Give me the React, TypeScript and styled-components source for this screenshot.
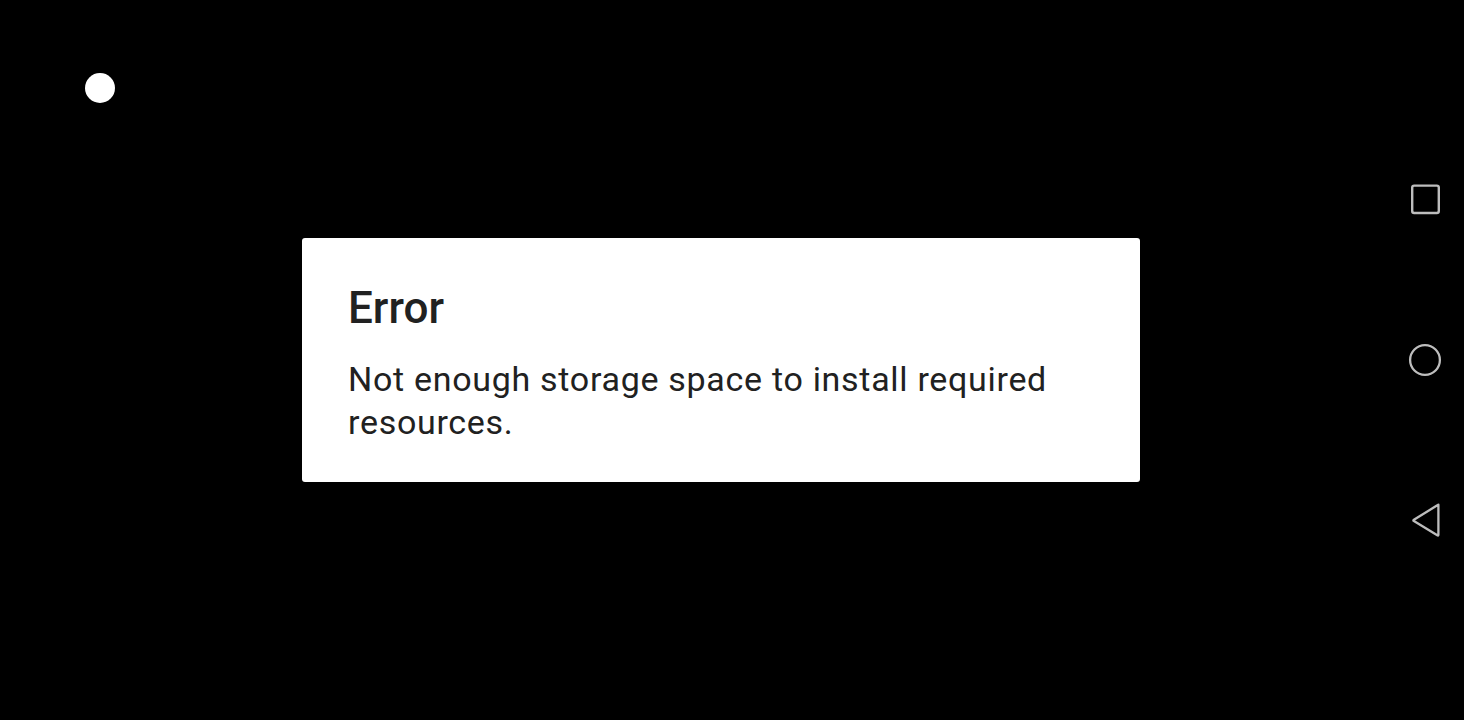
import React from "react";
import styled, { createGlobalStyle } from "styled-components";

const GlobalStyle = createGlobalStyle`
  html, body {
    margin: 0;
    padding: 0;
    background: #000;
  }
  body {
    font-family: Roboto, "Noto Sans", sans-serif;
  }
`;

const Screen = styled.div`
  width: 1464px;
  height: 720px;
  background: #000;
  display: grid;
  grid-template-columns: 1fr 78px;
  overflow: hidden;
`;

const Main = styled.div`
  display: flex;
  flex-direction: column;
  align-items: flex-start;
  padding: 73px 0 0 85px;
`;

const Dot = styled.div`
  width: 30px;
  height: 30px;
  border-radius: 50%;
  background: #fff;
`;

const Dialog = styled.div`
  margin: 135px 0 0 217px;
  width: 838px;
  box-sizing: border-box;
  padding: 44px 46px 37px;
  background: #fff;
  border-radius: 3px;
  display: flex;
  flex-direction: column;
  gap: 24px;
`;

const Title = styled.div`
  font-family: Roboto, sans-serif;
  font-weight: 500;
  font-size: 44px;
  line-height: 52px;
  color: #212121;
`;

const Message = styled.div`
  font-family: Roboto, sans-serif;
  font-weight: 400;
  font-size: 34px;
  letter-spacing: 0.7px;
  line-height: 43.3px;
  color: #212121;
`;

const NavBar = styled.div`
  display: flex;
  flex-direction: column;
  align-items: center;
  justify-content: center;
  gap: 120px;
`;

const NavButton = styled.div`
  width: 40px;
  height: 40px;
  display: flex;
  align-items: center;
  justify-content: center;
  color: #bdbdbd;
`;

export default function App() {
  return (
    <>
      <GlobalStyle />
      <Screen>
        <Main>
          <Dot />
          <Dialog>
            <Title>Error</Title>
            <Message>
              Not enough storage space to install required resources.
            </Message>
          </Dialog>
        </Main>
        <NavBar>
          <NavButton>
            <svg width="40" height="40" viewBox="0 0 40 40">
              <rect x="7.2" y="5.6" width="26.6" height="27.4" rx="2" fill="none" stroke="currentColor" strokeWidth="2.4" />
            </svg>
          </NavButton>
          <NavButton>
            <svg width="40" height="40" viewBox="0 0 40 40">
              <circle cx="20" cy="20" r="14.9" fill="none" stroke="currentColor" strokeWidth="2.3" />
            </svg>
          </NavButton>
          <NavButton>
            <svg width="40" height="40" viewBox="0 0 40 40">
              <path d="M33.4 4.7 L33.4 34.7 Q33.4 36 32.3 35.3 L8.9 21.1 Q7.8 20.5 8.9 19.8 L32.3 5.3 Q33.4 4.5 33.4 5.8 Z" fill="none" stroke="currentColor" strokeWidth="2.3" strokeLinejoin="round" />
            </svg>
          </NavButton>
        </NavBar>
      </Screen>
    </>
  );
}
